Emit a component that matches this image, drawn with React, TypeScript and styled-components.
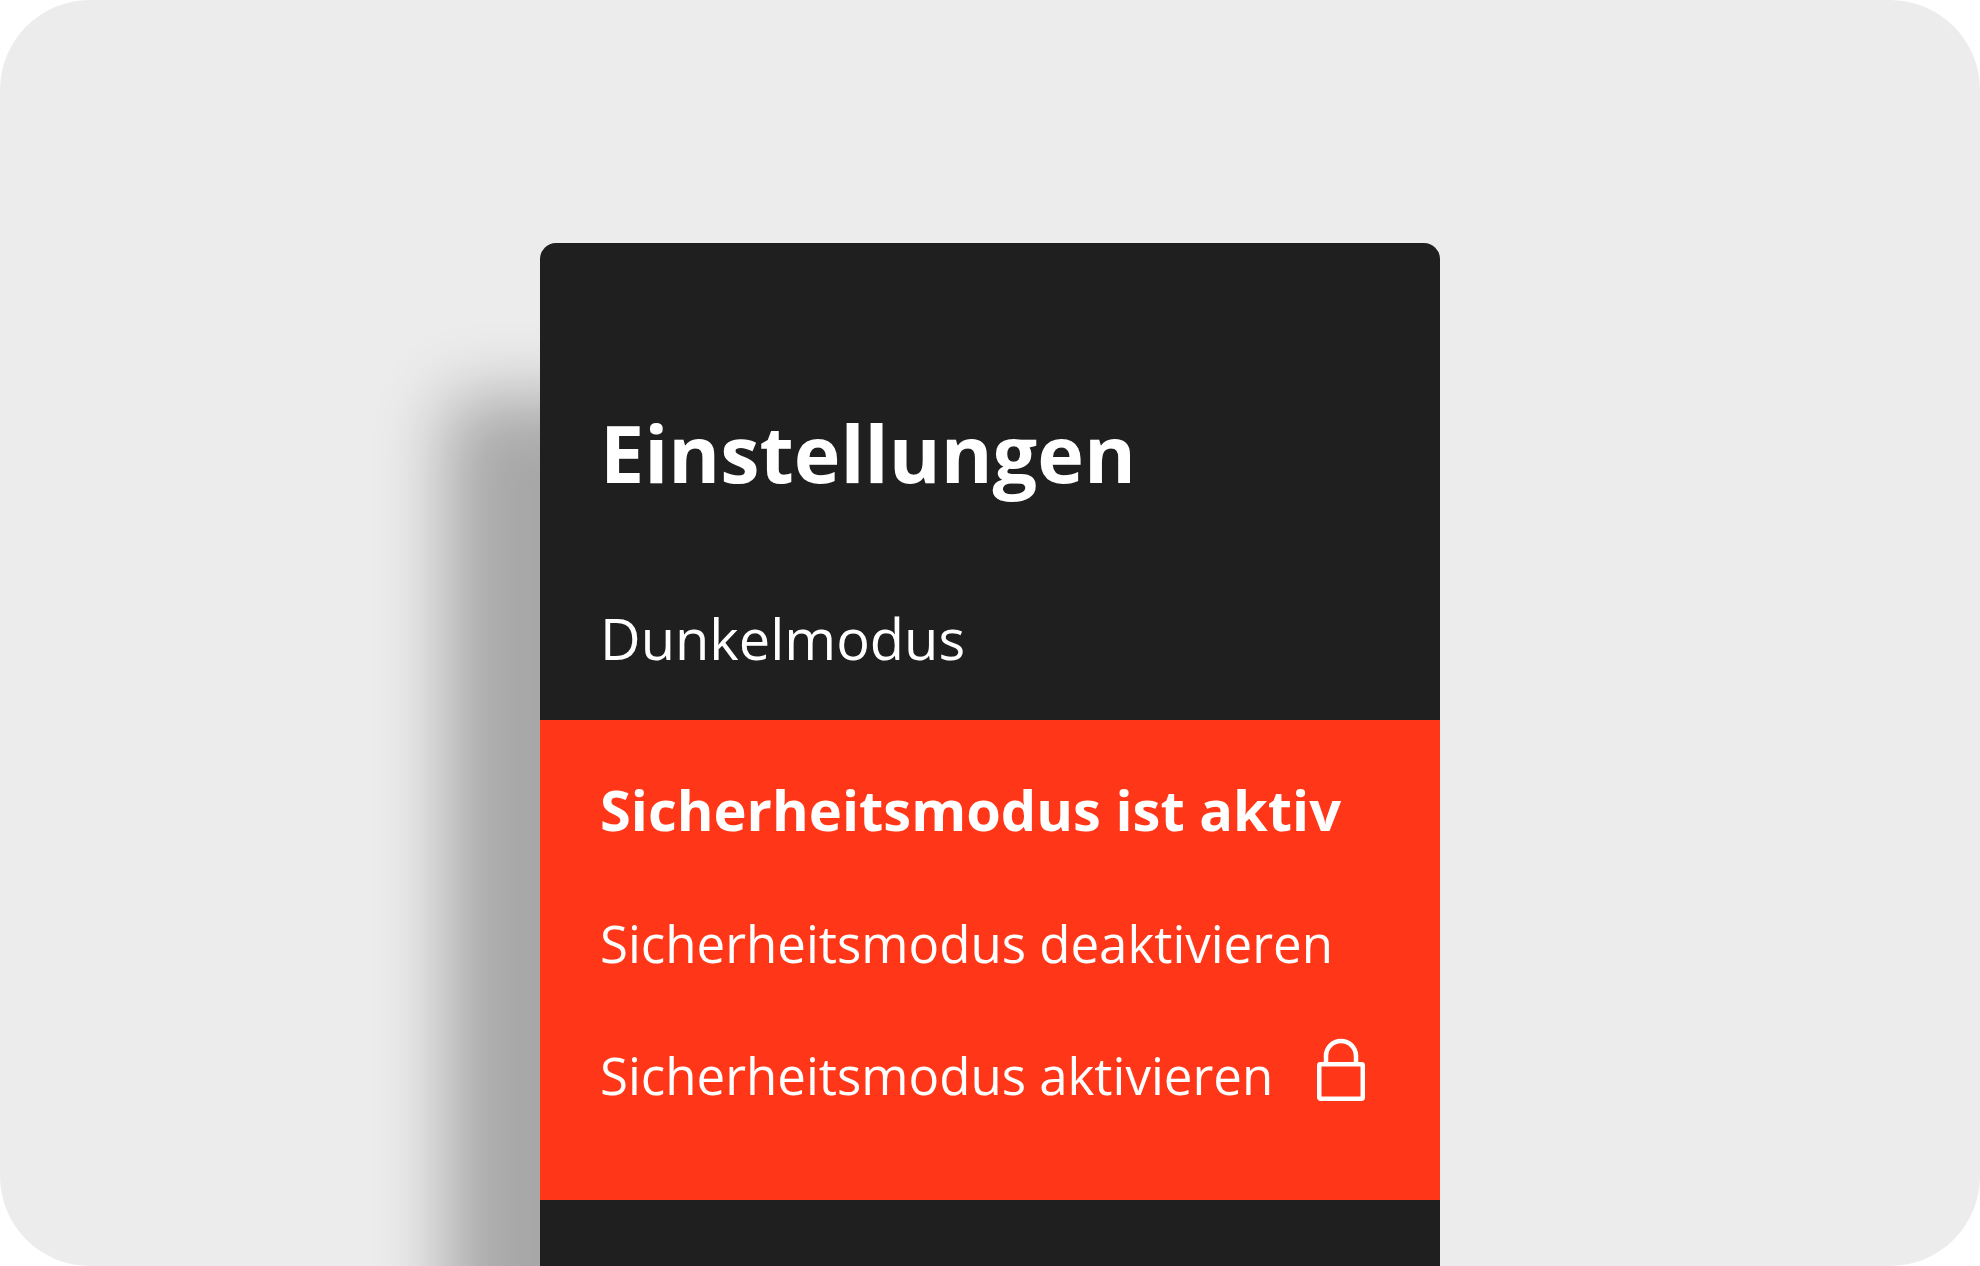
import React from "react";
import styled, { createGlobalStyle } from "styled-components";

const GlobalStyle = createGlobalStyle`
  *, *::before, *::after {
    box-sizing: border-box;
  }

  body {
    margin: 0;
    background: #ffffff;
    font-family: "Open Sans", "Noto Sans", sans-serif;
  }
`;

const Stage = styled.main`
  display: flex;
  justify-content: center;
  min-height: 100vh;
  padding-top: 243px;
  overflow: hidden;
  border-radius: 90px;
  background: #ececec;
`;

const Panel = styled.section`
  display: flex;
  flex-direction: column;
  width: 900px;
  max-width: 100%;
  padding-top: 154px;
  border-radius: 16px 16px 0 0;
  background: #1f1f1f;
  color: #ffffff;
  box-shadow: -94px 154px 70px rgba(0, 0, 0, 0.29);
`;

const Title = styled.h1`
  margin: 0 0 47px;
  padding: 0 60px;
  font-size: 79px;
  font-weight: 700;
  line-height: 112px;
`;

const Item = styled.button<{ $size: number; $height: number }>`
  display: flex;
  align-items: center;
  justify-content: space-between;
  width: 100%;
  height: ${(p) => p.$height}px;
  padding: 0 75px 0 60px;
  border: 0;
  background: transparent;
  color: inherit;
  font: inherit;
  font-size: ${(p) => p.$size}px;
  text-align: left;
  white-space: nowrap;
  cursor: pointer;
`;

const SafeMode = styled.section`
  padding: 24px 0 59px;
  background: #ff3718;
`;

const SafeModeTitle = styled.h2`
  margin: 0 0 3px;
  padding: 0 60px;
  font-size: 56px;
  font-weight: 700;
  line-height: 130px;
  white-space: nowrap;
`;

const LockIcon = () => (
  <svg width="48" height="74" viewBox="0 0 48 74" fill="none" stroke="currentColor" strokeWidth="4.5" aria-hidden="true">
    <rect x="2.25" y="26.25" width="43.5" height="34.5" rx="1.2" />
    <path d="M9 26V18a15 15 0 0 1 30 0v8" />
  </svg>
);

export default function App() {
  return (
    <>
      <GlobalStyle />
      <Stage>
        <Panel>
          <Title>Einstellungen</Title>
          <Item type="button" $size={56} $height={164}>
            Dunkelmodus
          </Item>
          <SafeMode>
            <SafeModeTitle>Sicherheitsmodus ist aktiv</SafeModeTitle>
            <Item type="button" $size={51} $height={132}>
              Sicherheitsmodus deaktivieren
            </Item>
            <Item type="button" $size={51} $height={132}>
              Sicherheitsmodus aktivieren
              <LockIcon />
            </Item>
          </SafeMode>
        </Panel>
      </Stage>
    </>
  );
}
